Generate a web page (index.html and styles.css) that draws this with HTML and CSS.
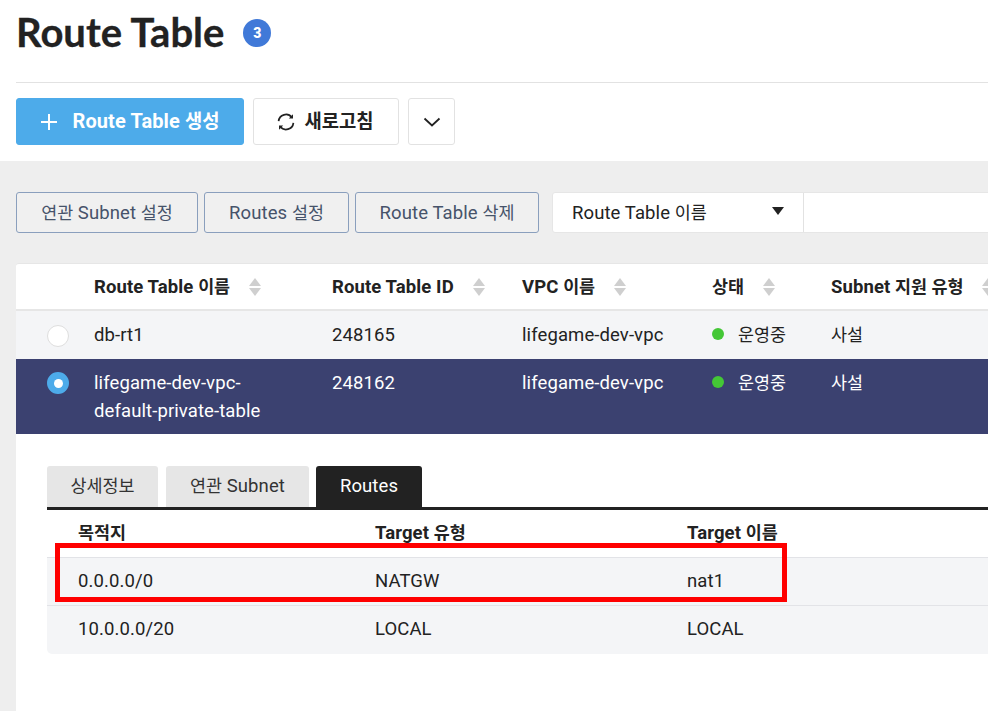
FILE: index.html
```html
<!DOCTYPE html>
<html lang="ko">
<head>
<meta charset="utf-8">
<title>Route Table</title>
<link rel="stylesheet" href="styles.css">
</head>
<body>
<div class="page">
  <header class="top">
    <div class="title-row">
      <h1 class="title">Route Table</h1>
      <span class="count">3</span>
    </div>
    <div class="toolbar">
      <button class="btn btn-primary">
        <svg class="ico-plus" width="18" height="18" viewBox="0 0 18 18"><path d="M9 1v16M1 9h16" stroke="#fff" stroke-width="2" fill="none"/></svg>
        <span>Route Table <span class="ko">생성</span></span>
      </button>
      <button class="btn btn-refresh">
        <svg width="20" height="20" viewBox="0 0 20 20" fill="none" stroke="#222" stroke-width="1.7"><path d="M2.6 9.2A7.4 7.4 0 0 1 15.8 5.4"/><path d="M17.4 10.8A7.4 7.4 0 0 1 4.2 14.6"/><path d="M17 2.2v4.2h-4.2" stroke-width="0" fill="#222"/><path d="M3 17.8v-4.2h4.2" stroke-width="0" fill="#222"/></svg>
        <span class="ko">새로고침</span>
      </button>
      <button class="btn btn-more">
        <svg width="18" height="10" viewBox="0 0 18 10" fill="none" stroke="#222" stroke-width="1.8"><path d="M1.5 1.5 9 8.5l7.5-7"/></svg>
      </button>
    </div>
  </header>

  <main class="content">
    <div class="actions">
      <button class="btn-line b1"><span class="ko">연관</span> Subnet <span class="ko">설정</span></button>
      <button class="btn-line b2">Routes <span class="ko">설정</span></button>
      <button class="btn-line b3">Route Table <span class="ko">삭제</span></button>
      <div class="search">
        <div class="search-select"><span>Route Table <span class="ko">이름</span></span><i class="caret"></i></div>
        <div class="search-input"></div>
      </div>
    </div>

    <section class="panel">
      <div class="row head">
        <div></div>
        <div class="th"><span>Route Table <span class="ko">이름</span></span><i class="sort"></i></div>
        <div class="th"><span>Route Table ID</span><i class="sort"></i></div>
        <div class="th"><span>VPC <span class="ko">이름</span></span><i class="sort"></i></div>
        <div class="th"><span class="ko">상태</span><i class="sort"></i></div>
        <div class="th"><span>Subnet <span class="ko">지원 유형</span></span><i class="sort"></i></div>
      </div>
      <div class="row item">
        <div class="radio-cell"><span class="radio"></span></div>
        <div>db-rt1</div>
        <div>248165</div>
        <div>lifegame-dev-vpc</div>
        <div class="status"><i class="dot"></i><span class="ko">운영중</span></div>
        <div class="ko">사설</div>
      </div>
      <div class="row item selected">
        <div class="radio-cell"><span class="radio on"></span></div>
        <div class="name">lifegame-dev-vpc-<br>default-private-table</div>
        <div>248162</div>
        <div>lifegame-dev-vpc</div>
        <div class="status"><i class="dot"></i><span class="ko">운영중</span></div>
        <div class="ko">사설</div>
      </div>

      <div class="detail">
        <div class="tabs">
          <div class="tab t1"><span class="ko">상세정보</span></div>
          <div class="tab t2"><span><span class="ko">연관</span> Subnet</span></div>
          <div class="tab t3 active">Routes</div>
        </div>
        <div class="dtable">
          <div class="drow dhead"><div class="ko">목적지</div><div>Target <span class="ko">유형</span></div><div>Target <span class="ko">이름</span></div></div>
          <div class="drow"><div>0.0.0.0/0</div><div>NATGW</div><div>nat1</div></div>
          <div class="drow"><div>10.0.0.0/20</div><div>LOCAL</div><div>LOCAL</div></div>
        </div>
      </div>
    </section>
  </main>
  <div class="highlight"></div>
</div>
</body>
</html>
```
FILE: styles.css
```css
* { box-sizing: border-box; }
html, body { margin: 0; height: 100%; overflow: hidden; }
body {
  font-family: Roboto, "Noto Sans CJK KR", sans-serif;
  font-size: 18.5px;
  line-height: 24px;
  letter-spacing: 0.1px;
  color: #222;
  background: #eee;
}
button { font: inherit; letter-spacing: inherit; cursor: pointer; }
.ko { font-size: 17.4px; letter-spacing: 0; }
.page { position: relative; width: 988px; height: 711px; overflow: hidden; display: flex; flex-direction: column; }

.top { background: #fff; padding: 0 0 16px 16px; height: 161px; flex: none; }
.title-row { height: 83px; display: flex; align-items: flex-start; padding-top: 8px; border-bottom: 1px solid #e2e2e2; }
.title { margin: 0; font-family: Lato, sans-serif; font-size: 40px; line-height: 48px; font-weight: 700; letter-spacing: 0; color: #222; -webkit-text-stroke: 0.3px #222; }
.count { width: 28px; height: 28px; margin: 11px 0 0 19px; border-radius: 50%; background: #4079d8; color: #fff; font-size: 14px; line-height: 28px; letter-spacing: 0; font-weight: 900; display: flex; align-items: center; justify-content: center; }

.toolbar { display: flex; gap: 9px; padding-top: 15px; }
.btn { height: 47px; border-radius: 3px; border: 1px solid #e2e2e2; background: #fff; display: flex; align-items: center; justify-content: center; font-weight: 700; font-size: 20px; color: #222; padding: 0; }
.btn .ko { font-size: 18.8px; }
.btn-primary { width: 228px; background: #4dabea; border-color: #4dabea; color: #fff; gap: 14px; }
.btn-refresh { width: 146px; gap: 8px; padding-right: 2px; }
.btn-more { width: 47px; }

.content { flex: 1; padding: 31px 0 0 16px; min-height: 0; }
.actions { display: flex; height: 41px; }
.btn-line { height: 41px; border: 1px solid #8a9fbd; border-radius: 3px; background: #f0f0f0; color: #46536a; padding: 0; flex: none; }
.b1 { width: 182px; margin-right: 6px; }
.b2 { width: 145px; margin-right: 6px; }
.b3 { width: 184px; margin-right: 13px; }
.search { display: flex; flex: none; width: 500px; background: #fff; border: 1px solid #e6e6e6; border-radius: 3px; }
.search-select { width: 251px; border-right: 1px solid #e2e2e2; padding: 0 19px; display: flex; align-items: center; justify-content: space-between; }
.caret { width: 0; height: 0; border-left: 6px solid transparent; border-right: 6px solid transparent; border-top: 8px solid #222; margin-top: -3px; }
.search-input { flex: 1; }

.panel { margin-top: 30px; width: 1000px; height: 470px; background: #fff; border-top: 1px solid #e6e6e6; border-radius: 3px 0 0 0; }
.row { display: grid; grid-template-columns: 78px 238px 190px 190px 119px 1fr; }
.head { height: 47px; align-items: center; font-weight: 700; border-bottom: 2px solid #e6e6e6; }
.th { display: flex; align-items: center; }
.sort { display: inline-block; width: 12px; height: 18px; position: relative; margin-left: 19px; flex: none; }
.sort::before, .sort::after { content: ""; position: absolute; left: 0; width: 0; height: 0; border-left: 6px solid transparent; border-right: 6px solid transparent; }
.sort::before { top: 0; border-bottom: 8px solid #cfcfcf; }
.sort::after { bottom: 0; border-top: 8px solid #cfcfcf; }

.item { height: 48px; background: #f4f5f7; padding-top: 12px; line-height: 24px; }
.selected { height: 75px; background: #3b4170; color: #fff; padding-top: 10px; line-height: 28px; }
.name { line-height: 28px; }
.radio-cell { padding: 2px 0 0 31px; }
.selected .radio-cell { padding-top: 3px; }
.radio { display: block; width: 22px; height: 22px; border-radius: 50%; background: #fff; border: 1px solid #dedede; }
.radio.on { background: #4dabea; border: 6px solid #4dabea; }
.radio.on::after { content: ""; display: block; width: 9px; height: 9px; margin: 0.5px; border-radius: 50%; background: #fff; }
.status { display: flex; align-items: flex-start; }
.dot { width: 12px; height: 12px; border-radius: 50%; background: #44c736; margin: 5px 14px 0 0; flex: none; }
.selected .dot { margin-top: 7px; }

.detail { padding: 32px 0 0 31px; }
.tabs { display: flex; height: 41px; }
.tab { height: 41px; background: #e6e6e6; border-radius: 3px 3px 0 0; display: flex; align-items: center; justify-content: center; padding-bottom: 1px; color: #333; flex: none; white-space: nowrap; }
.t1 { width: 111px; margin-right: 8px; }
.t2 { width: 143px; margin-right: 7px; }
.t3 { width: 106px; }
.active { background: #222; color: #fff; }
.dtable { border-top: 3px solid #222; border-radius: 0 0 0 5px; overflow: hidden; }
.drow { display: grid; grid-template-columns: 297px 312px 1fr; height: 48px; padding-left: 31px; align-items: center; background: #f4f5f7; border-bottom: 1px solid #e2e3e7; padding-bottom: 2px; }
.drow:last-child { border-bottom: 0; }
.dhead { background: #fff; font-weight: 700; padding-bottom: 2px; }

.highlight { position: absolute; left: 55px; top: 543px; width: 732px; height: 59px; border: 5px solid #f00; }
```
